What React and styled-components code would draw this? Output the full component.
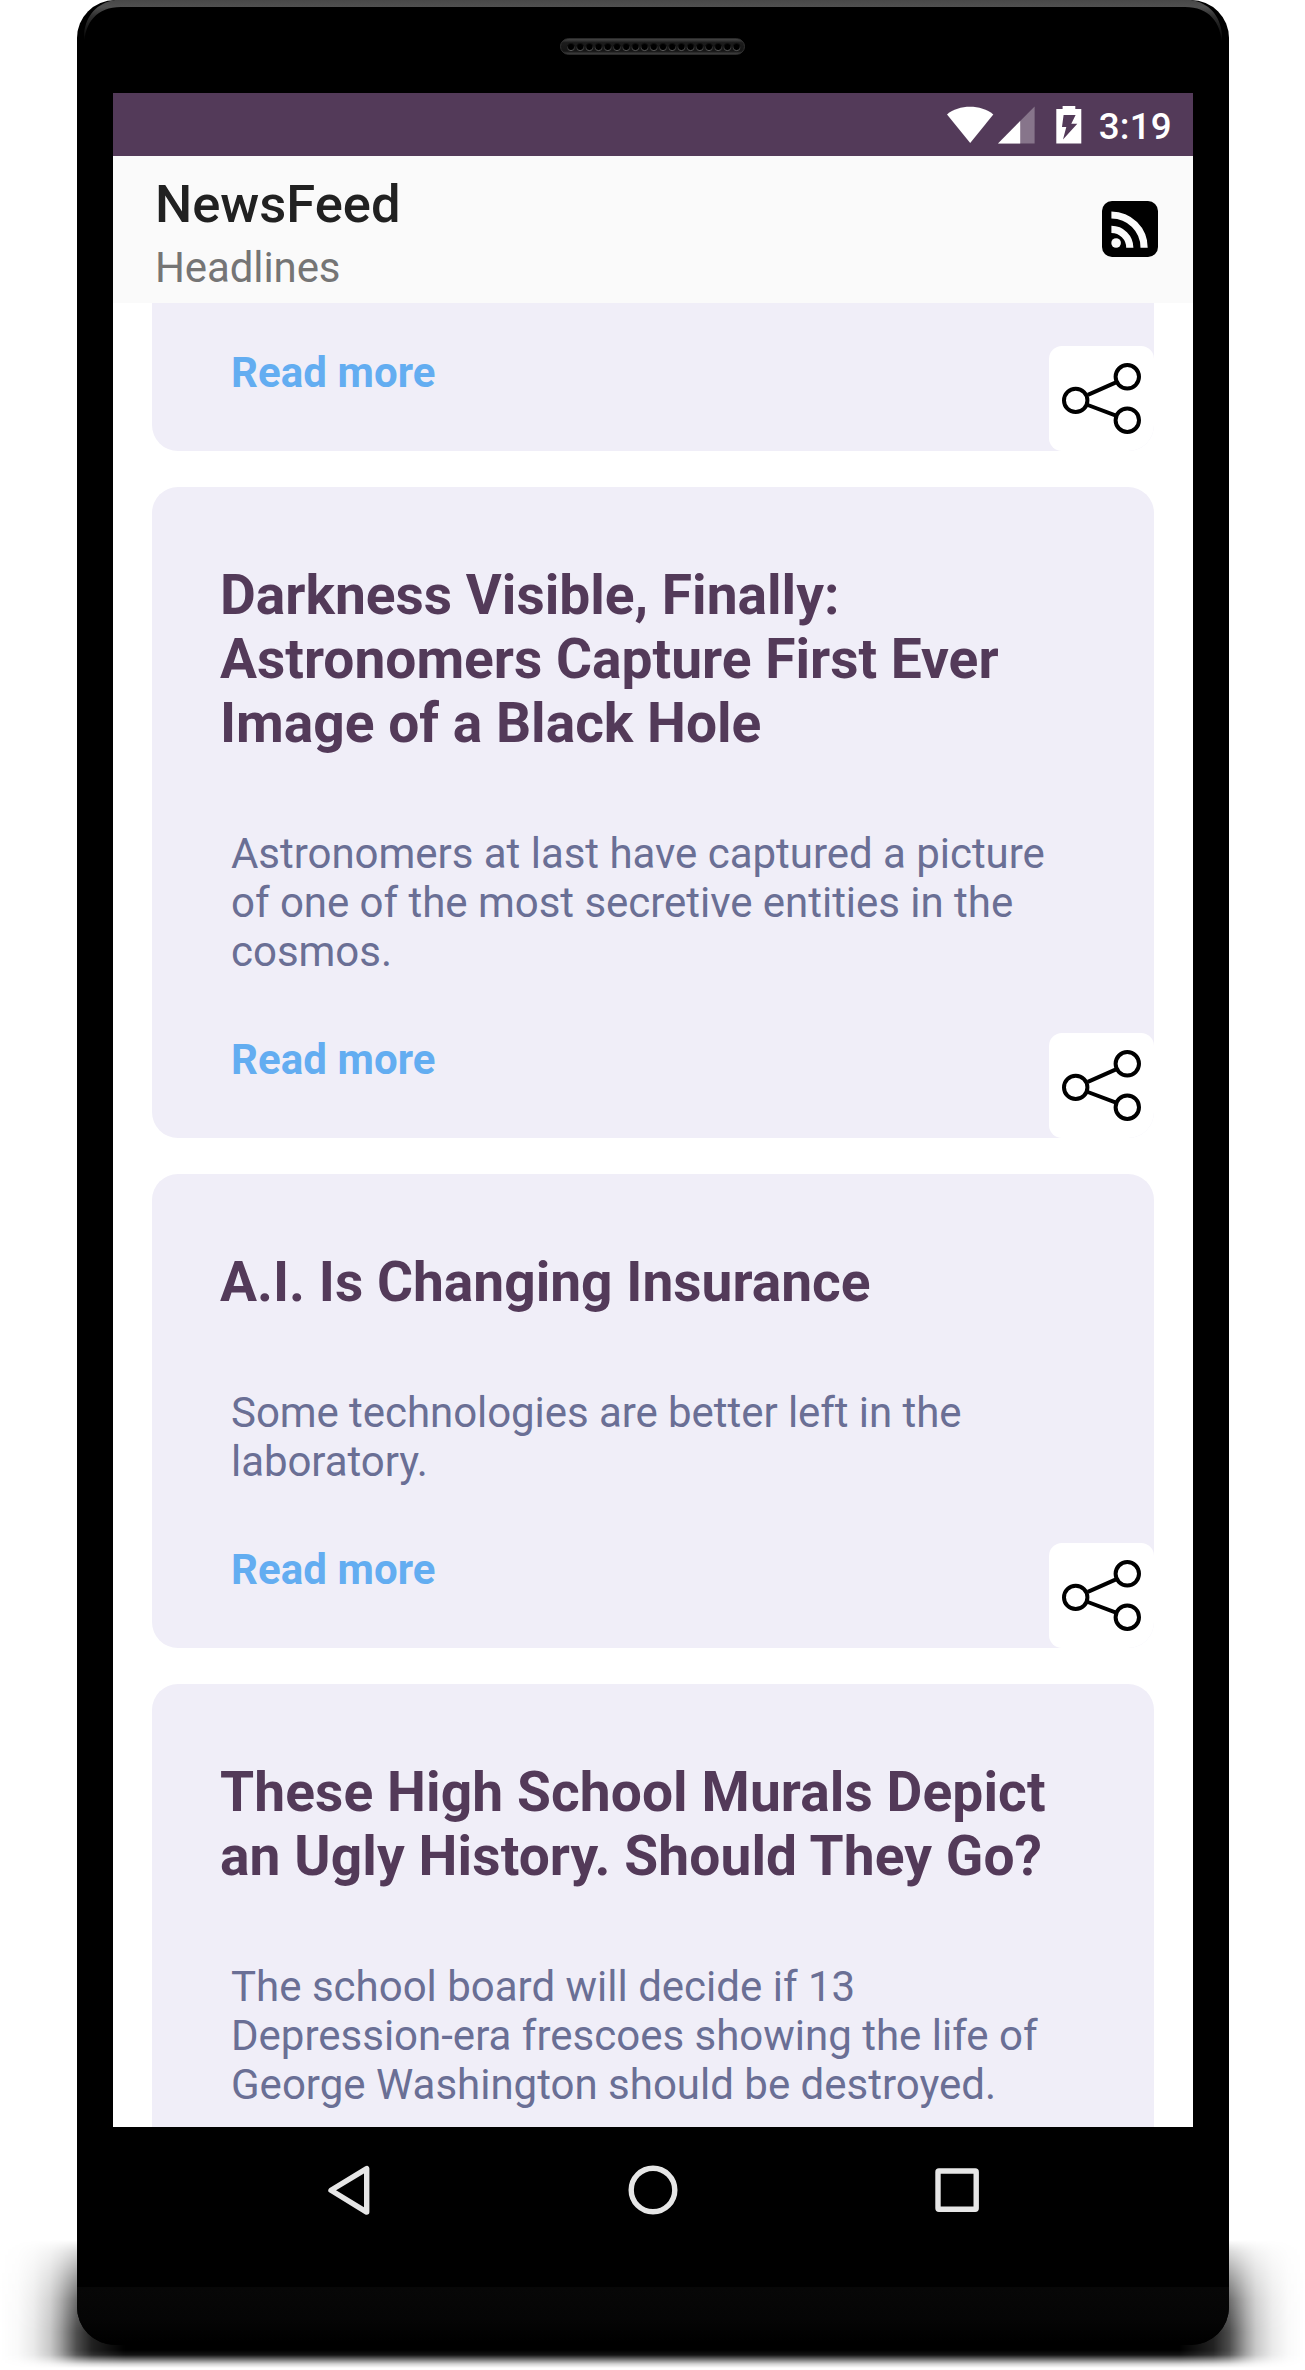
import React from "react";
import styled, { createGlobalStyle } from "styled-components";

const GlobalStyle = createGlobalStyle`
  * { box-sizing: border-box; }
  html, body { margin: 0; padding: 0; background: #fff; }
  body { font-family: Roboto, "Noto Sans", sans-serif; }
  h1, h2, p { margin: 0; }
  button { border: 0; padding: 0; background: none; font: inherit; }
`;

const Stage = styled.div`
  position: relative;
  width: 1305px;
  height: 2370px;
  padding: 0 76px 0 77px;
  overflow: hidden;
  background: #fff;
`;

const GroundShadow = styled.div`
  position: absolute;
  left: 0;
  right: 0;
  top: 2236px;
  height: 134px;
  background: linear-gradient(
    90deg,
    transparent 0,
    rgba(0, 0, 0, 0.02) 17px,
    rgba(0, 0, 0, 0.08) 33px,
    rgba(0, 0, 0, 0.21) 50px,
    rgba(0, 0, 0, 0.37) 60px,
    rgba(0, 0, 0, 0.7) 77px,
    rgba(0, 0, 0, 0.87) 92px,
    #000 125px,
    #000 1180px,
    rgba(0, 0, 0, 0.87) 1213px,
    rgba(0, 0, 0, 0.7) 1229px,
    rgba(0, 0, 0, 0.37) 1246px,
    rgba(0, 0, 0, 0.21) 1256px,
    rgba(0, 0, 0, 0.08) 1273px,
    rgba(0, 0, 0, 0.02) 1289px,
    transparent 1305px
  );
  mask-image: linear-gradient(
    transparent 4px,
    rgba(0, 0, 0, 0.2) 15px,
    rgba(0, 0, 0, 0.52) 39px,
    rgba(0, 0, 0, 0.82) 64px,
    #000 96px,
    #000 114px,
    rgba(0, 0, 0, 0.92) 119px,
    rgba(0, 0, 0, 0.5) 124px,
    rgba(0, 0, 0, 0.17) 128px,
    transparent 132px
  );
`;

const Phone = styled.div`
  position: relative;
  width: 1152px;
  height: 2345px;
  padding: 0 36px;
  border-radius: 38px;
  overflow: hidden;
  background: #000;
  display: flex;
  flex-direction: column;
`;

const TopEdge = styled.svg`
  position: absolute;
  left: 0;
  top: 0;
`;

const Forehead = styled.div`
  flex: none;
  height: 93px;
  padding-top: 38px;
  display: flex;
  justify-content: center;
`;

const Screen = styled.div`
  flex: none;
  height: 2160px;
  background: #fff;
  display: flex;
  flex-direction: column;
`;

const Chin = styled.div`
  flex: none;
  height: 58px;
  margin: 34px -36px 0;
  background: linear-gradient(#070707, #050505 55%, #000 95%);
`;

const StatusBar = styled.div`
  flex: none;
  height: 63px;
  padding: 0 21px 0 0;
  background: #533a59;
  color: #fff;
  display: flex;
  align-items: center;
  justify-content: flex-end;
`;

const StatusIcons = styled.svg`
  display: block;
  margin-right: 16px;
`;

const Clock = styled.span`
  font-size: 36.75px;
  font-weight: 500;
  line-height: 43px;
  letter-spacing: 0.25px;
  padding-top: 3px;
`;

const AppBar = styled.header`
  flex: none;
  height: 147px;
  padding: 0 35px 0 42px;
  background: #fafafa;
  display: flex;
  align-items: flex-start;
  justify-content: space-between;
`;

const AppNames = styled.div`
  padding-top: 17px;
`;

const AppTitle = styled.h1`
  font-size: 52.5px;
  font-weight: 500;
  line-height: 62px;
  color: #212121;
`;

const AppSubtitle = styled.p`
  margin-top: 8px;
  font-size: 42px;
  line-height: 50px;
  letter-spacing: -0.1px;
  color: #757575;
`;

const SourceButton = styled.button`
  width: 56px;
  height: 56px;
  margin-top: 45px;
  svg { display: block; }
`;

const Feed = styled.main`
  flex: none;
  height: 1824px;
  padding: 0 39px;
  overflow: hidden;
  display: flex;
  flex-direction: column;
  gap: 36px;
`;

const radii = {
  top: "26px 26px 0 0",
  bottom: "0 0 26px 26px",
  all: "26px",
};

const Card = styled.article`
  flex: none;
  width: 1002px;
  height: ${(p) => p.$height}px;
  border-radius: ${(p) => radii[p.$rounded]};
  overflow: hidden;
  background: #f0eef8;
  display: flex;
  flex-direction: column;
  justify-content: ${(p) => (p.$rounded === "bottom" ? "flex-end" : "space-between")};
`;

const Copy = styled.div`
  padding: 76px 60px 0 68px;
`;

const Headline = styled.h2`
  font-size: 55.1px;
  font-weight: 700;
  line-height: 64px;
  letter-spacing: ${(p) => p.$tracking || 0}px;
  color: #533a59;
  white-space: pre-line;
`;

const Summary = styled.p`
  margin: 74px 0 0 11px;
  font-size: 42px;
  line-height: 49px;
  letter-spacing: ${(p) => p.$tracking || 0}px;
  color: #6a6f95;
  white-space: pre-line;
`;

const Actions = styled.div`
  display: flex;
  align-items: flex-start;
  justify-content: space-between;
  height: 105px;
  padding-left: 79px;
`;

const ReadMore = styled.a`
  font-size: 42px;
  font-weight: 700;
  line-height: 50px;
  letter-spacing: 0.08px;
  padding-top: 2px;
  color: #63adf1;
`;

const ShareButton = styled.button`
  width: 105px;
  height: 105px;
  border-radius: 13px;
  background: #fff;
`;

const NavBar = styled.nav`
  flex: none;
  height: 126px;
  padding: 0 84px;
  background: #000;
  display: grid;
  grid-template-columns: repeat(3, 304px);
  align-items: center;
  justify-items: center;
`;

const NavButton = styled.button`
  width: 60px;
  height: 60px;
  svg { display: block; }
`;

const Speaker = () => (
  <svg width="186" height="18" viewBox="0 0 186 18">
    <defs>
      <linearGradient id="grille" x1="0" y1="0" x2="0" y2="1">
        <stop offset="0" stopColor="#4c4c4c" />
        <stop offset="0.25" stopColor="#1c1c1c" />
        <stop offset="0.8" stopColor="#151515" />
        <stop offset="1" stopColor="#4a4a4a" />
      </linearGradient>
      <linearGradient id="hole" x1="0" y1="0" x2="0" y2="1">
        <stop offset="0.3" stopColor="#101010" />
        <stop offset="1" stopColor="#666" />
      </linearGradient>
    </defs>
    <rect x="0.5" y="0.7" width="184" height="15.6" rx="7.8" fill="url(#grille)" stroke="#303030" />
    {Array.from({ length: 19 }, (_, i) => (
      <circle key={i} cx={11 + i * 9.2} cy="9" r="3.6" fill="#000" stroke="url(#hole)" strokeWidth="0.9" />
    ))}
  </svg>
);

const BezelHighlight = () => (
  <TopEdge width="1152" height="46" viewBox="0 0 1152 46">
    <defs>
      <linearGradient id="edge" x1="0" y1="0" x2="0" y2="46" gradientUnits="userSpaceOnUse">
        <stop offset="0" stopColor="#484848" />
        <stop offset="0.15" stopColor="#505050" />
        <stop offset="0.35" stopColor="#303030" />
        <stop offset="0.9" stopColor="#000" />
      </linearGradient>
    </defs>
    <path d="M7 45V34C9 15 20 3 38 0H1114C1132 3 1143 15 1145 34V45C1144 22 1132 7 1108 7H44C20 7 8 22 7 45Z" fill="url(#edge)" />
  </TopEdge>
);

const StatusGlyphs = () => (
  <StatusIcons width="136" height="40" viewBox="0 0 136 40">
    <path d="M0 9.5C12-.7 34-.7 46.3 9.5L23.2 38Z" fill="#fff" />
    <path d="M87.6 1.5V38.5H51Z" fill="#fff" opacity="0.3" />
    <path d="M73.2 16V38.5H51Z" fill="#fff" />
    <path fillRule="evenodd" fill="#fff" d="M115.6 1H128.3V4H134.3V38.5H109.3V4H115.6ZM116.6 10L115 22H119.3L116 34.6L130.3 18.7H124.3L128.6 10Z" />
  </StatusIcons>
);

const RssGlyph = () => (
  <svg width="56" height="56" viewBox="0 0 56 56">
    <rect width="56" height="56" rx="10" fill="#000" />
    <g fill="none" stroke="#fafafa" strokeWidth="7.2">
      <path d="M9.4 14A32.7 32.7 0 0 1 42.1 46.7" />
      <path d="M9.4 28.3A18.4 18.4 0 0 1 27.8 46.7" />
    </g>
    <circle cx="14.1" cy="42" r="4.8" fill="#fafafa" />
  </svg>
);

const ShareGlyph = () => (
  <svg width="105" height="105" viewBox="0 0 105 105" fill="none" stroke="#000" strokeWidth="4">
    <circle cx="26.7" cy="54.4" r="11.7" />
    <circle cx="78.3" cy="30.8" r="11.7" />
    <circle cx="78.3" cy="74.2" r="11.7" />
    <path d="M38.8 48.9L67 36.3M38.8 59L67 69.6" />
  </svg>
);

const NavGlyph = ({ children }) => (
  <svg width="60" height="60" viewBox="0 0 60 60" fill="none" stroke="#e6e6e6" strokeWidth="5.4" strokeLinejoin="round">
    {children}
  </svg>
);

const stories = [
  { height: 148, rounded: "bottom", actions: true },
  {
    height: 651,
    rounded: "all",
    actions: true,
    summaryTracking: -0.03,
    title: "Darkness Visible, Finally:\nAstronomers Capture First Ever\nImage of a Black Hole",
    summary: "Astronomers at last have captured a picture\nof one of the most secretive entities in the\ncosmos.",
  },
  {
    height: 474,
    rounded: "all",
    actions: true,
    summaryTracking: -0.06,
    title: "A.I. Is Changing Insurance",
    summary: "Some technologies are better left in the\nlaboratory.",
  },
  {
    height: 443,
    rounded: "top",
    tracking: 0.09,
    title: "These High School Murals Depict\nan Ugly History. Should They Go?",
    summary: "The school board will decide if 13\nDepression-era frescoes showing the life of\nGeorge Washington should be destroyed.",
  },
];

const Story = ({ story }) => (
  <Card $height={story.height} $rounded={story.rounded}>
    {story.title && (
      <Copy>
        <Headline $tracking={story.tracking}>{story.title}</Headline>
        <Summary $tracking={story.summaryTracking}>{story.summary}</Summary>
      </Copy>
    )}
    {story.actions && (
      <Actions>
        <ReadMore>Read more</ReadMore>
        <ShareButton aria-label="Share">
          <ShareGlyph />
        </ShareButton>
      </Actions>
    )}
  </Card>
);

export default function App() {
  return (
    <Stage>
      <GlobalStyle />
      <GroundShadow />
      <Phone>
        <BezelHighlight />
        <Forehead>
          <Speaker />
        </Forehead>
        <Screen>
          <StatusBar>
            <StatusGlyphs />
            <Clock>3:19</Clock>
          </StatusBar>
          <AppBar>
            <AppNames>
              <AppTitle>NewsFeed</AppTitle>
              <AppSubtitle>Headlines</AppSubtitle>
            </AppNames>
            <SourceButton aria-label="Feeds">
              <RssGlyph />
            </SourceButton>
          </AppBar>
          <Feed>
            {stories.map((s, i) => (
              <Story key={i} story={s} />
            ))}
          </Feed>
          <NavBar>
            <NavButton aria-label="Back">
              <NavGlyph>
                <path d="M12 30.3L47.7 8.6V52.1Z" />
              </NavGlyph>
            </NavButton>
            <NavButton aria-label="Home">
              <NavGlyph>
                <circle cx="30" cy="30" r="21.8" />
              </NavGlyph>
            </NavButton>
            <NavButton aria-label="Recent apps">
              <NavGlyph>
                <rect x="11" y="11" width="38.2" height="38.2" rx="1" />
              </NavGlyph>
            </NavButton>
          </NavBar>
        </Screen>
        <Chin />
      </Phone>
    </Stage>
  );
}
